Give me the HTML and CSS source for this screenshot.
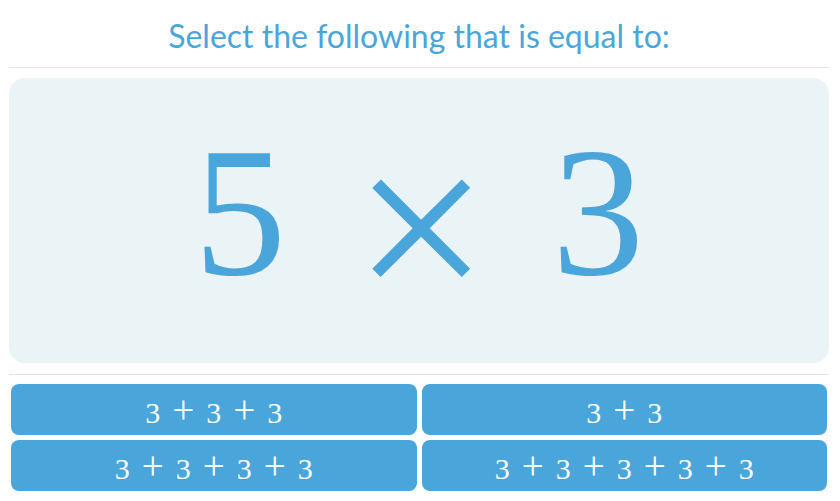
FILE: index.html
```html
<!DOCTYPE html>
<html lang="en">
<head>
<meta charset="UTF-8">
<title>Multiplication Quiz</title>
<link rel="stylesheet" href="styles.css">
</head>
<body>
<div class="quiz">
  <div class="prompt">Select the following that is equal to:</div>
  <div class="problem">
    <span class="num">5</span>
    <span class="op">&times;</span>
    <span class="num">3</span>
  </div>
  <div class="answers">
    <button class="choice">3<span class="plus">+</span>3<span class="plus">+</span>3</button>
    <button class="choice">3<span class="plus">+</span>3</button>
    <button class="choice">3<span class="plus">+</span>3<span class="plus">+</span>3<span class="plus">+</span>3</button>
    <button class="choice">3<span class="plus">+</span>3<span class="plus">+</span>3<span class="plus">+</span>3<span class="plus">+</span>3</button>
  </div>
</div>
</body>
</html>
```

FILE: styles.css
```css
body { margin: 0; background: #fff; font-family: 'Lato', 'Liberation Sans', sans-serif; }
.quiz { width: 820px; padding: 0 11px 0 9px; }
.prompt { height: 67px; border-bottom: 1px solid #dfe4e9; color: #4aa6da; font-size: 32px; text-align: center; line-height: 72px; }
.problem { margin-top: 10px; height: 267px; padding-bottom: 18px; border-radius: 16px; background: #eaf3f6; color: #4aa6da; font-family: 'Liberation Serif', serif; font-size: 185px; line-height: 1; display: flex; align-items: center; justify-content: center; }
.problem .op { font-size: 1.3em; margin: 32px 63px 0 67px; }
.answers { margin-top: 11px; border-top: 1px solid #dfe4e9; padding: 9px 2px 0; display: grid; grid-template-columns: 1fr 1fr; gap: 5px; }
.choice { height: 51px; border: none; border-radius: 8px; background: #4aa6da; color: #fff; font-family: 'Liberation Serif', serif; font-size: 30px; padding: 0; cursor: pointer; }
.choice .plus { font-size: 1.3em; margin: 0 12px; line-height: 1; }
```
